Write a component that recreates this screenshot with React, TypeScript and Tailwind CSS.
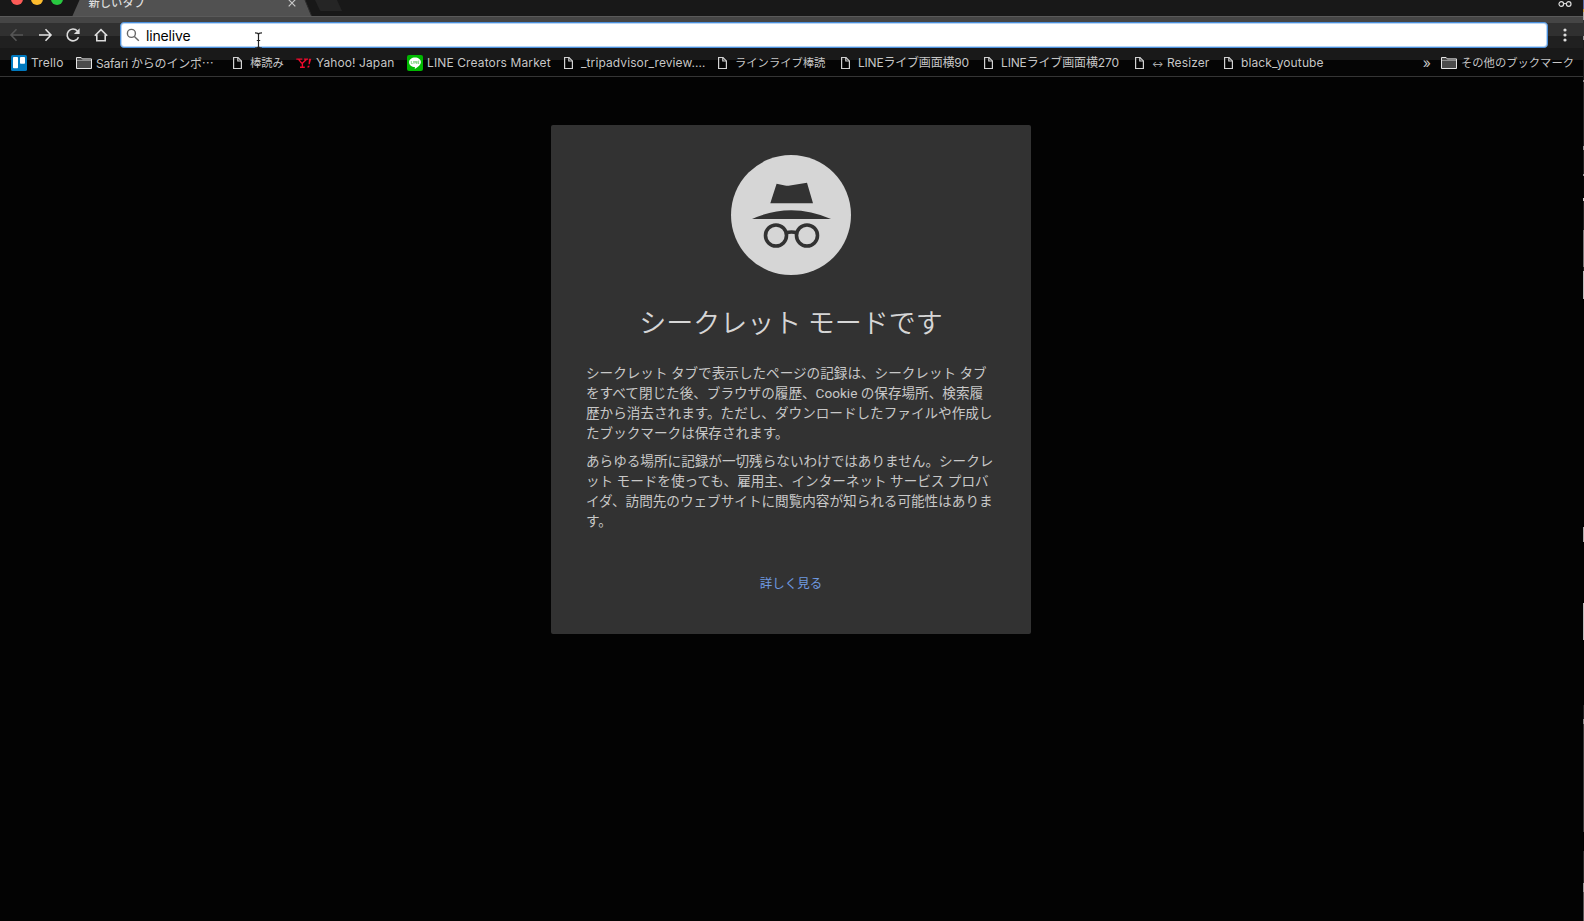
import type { ReactNode } from "react";

type IconKind = "trello" | "folder" | "page" | "yahoo" | "line";

interface Bookmark {
  label: ReactNode;
  icon: IconKind;
  slot: string;
  text: string;
}

const BOOKMARKS: Bookmark[] = [
  { label: "Trello", icon: "trello", slot: "w-[65px]", text: "tracking-[0.2px]" },
  {
    label: <>Safari からのインポ<span className="font-['Noto_Sans_CJK_JP',sans-serif]">…</span></>,
    icon: "folder",
    slot: "w-[154px]",
    text: "tracking-[-0.2px]",
  },
  { label: "棒読み", icon: "page", slot: "w-[66px]", text: "text-[11.3px]" },
  { label: "Yahoo! Japan", icon: "yahoo", slot: "w-[111px]", text: "tracking-[0.1px]" },
  { label: "LINE Creators Market", icon: "line", slot: "w-[154px]", text: "tracking-[0.12px]" },
  { label: "_tripadvisor_review.…", icon: "page", slot: "w-[154px]", text: "tracking-[0.1px]" },
  { label: "ラインライブ棒読", icon: "page", slot: "w-[123px]", text: "text-[11.3px]" },
  { label: "LINEライブ画面横90", icon: "page", slot: "w-[143px]", text: "tracking-[-0.2px]" },
  { label: "LINEライブ画面横270", icon: "page", slot: "w-[151px]", text: "tracking-[-0.15px]" },
  {
    label: <><span className="text-[8.5px]">↔</span> Resizer</>,
    icon: "page",
    slot: "w-[89px]",
    text: "tracking-[0.1px]",
  },
  { label: "black_youtube", icon: "page", slot: "w-[110px]", text: "tracking-[0.12px]" },
];

const FIRST_PARAGRAPH = [
  "シークレット タブで表示したページの記録は、シークレット タブ",
  "をすべて閉じた後、ブラウザの履歴、Cookie の保存場所、検索履",
  "歴から消去されます。ただし、ダウンロードしたファイルや作成し",
  "たブックマークは保存されます。",
];

const SECOND_PARAGRAPH = [
  "あらゆる場所に記録が一切残らないわけではありません。シークレ",
  "ット モードを使っても、雇用主、インターネット サービス プロバ",
  "イダ、訪問先のウェブサイトに閲覧内容が知られる可能性はありま",
  "す。",
];

function FolderIcon() {
  return (
    <svg width="16" height="16" viewBox="0 0 16 16" className="shrink-0">
      <path d="M.5 2.5h4.6l1.2 1.4h9.2v9.6H.5z" fill="#4b4b4b" stroke="#e4e4e4" />
      <path d="M1 5.5h14" stroke="#8d8d8d" />
    </svg>
  );
}

function BookmarkIcon({ kind }: { kind: IconKind }) {
  if (kind === "folder") return <FolderIcon />;
  if (kind === "trello") {
    return (
      <svg width="16" height="16" viewBox="0 0 16 16" className="shrink-0">
        <rect width="16" height="16" rx="1.6" fill="#0079bf" />
        <rect x="2" y="2" width="5" height="11.3" rx=".8" fill="#fff" />
        <rect x="9" y="2" width="5" height="6.8" rx=".8" fill="#fff" />
      </svg>
    );
  }
  if (kind === "yahoo") {
    return (
      <svg width="16" height="16" viewBox="0 0 16 16" className="shrink-0">
        <path d="M.3 4.1h6M8 4.1h4M2.6 4.4l3.2 4M10.3 4.4L6.4 8.3v3.8M4 12.2h4.8" fill="none" stroke="#f00a2d" strokeWidth="1.4" />
        <path d="M13 3.8h2.3l-1.6 5.4h-1.2zM11.8 10.8h1.8l-.5 1.7h-1.8z" fill="#f00a2d" />
      </svg>
    );
  }
  if (kind === "line") {
    return (
      <svg width="16" height="16" viewBox="0 0 16 16" className="shrink-0">
        <rect width="16" height="16" rx="2" fill="#00b900" />
        <path d="M8 2.6c3.3 0 5.9 2.1 5.9 4.7 0 2.3-2.7 4.6-5.7 6.5-.4.2-.5 0-.4-.4l.1-1.3C4.7 12 2.1 10 2.1 7.3 2.1 4.7 4.7 2.6 8 2.6z" fill="#fff" />
        <path d="M4.3 6v2.6h1.4M6.7 6v2.6M7.9 8.6V6l1.7 2.6V6M12.2 6.1h-1.3v2.4h1.3M11 7.3h1.1" fill="none" stroke="#5cc95c" strokeWidth=".7" />
      </svg>
    );
  }
  return (
    <svg width="16" height="16" viewBox="0 0 16 16" className="shrink-0">
      <path d="M3.600 2.500h4.400l3.400 3.400v7.600H3.600z" fill="none" stroke="#d2d2d2" strokeWidth="1.200" />
      <path d="M7.800 2.500v3.500h3.500" fill="none" stroke="#d2d2d2" strokeWidth="1.200" />
    </svg>
  );
}

function TabStrip() {
  return (
    <div className="relative h-[17px] overflow-hidden border-b border-[#5a5a5a] bg-[#181818]">
      {/* Window buttons, cut off by the top of the screen */}
      <svg width="70" height="16" className="absolute left-0 top-0">
        <circle cx="17" cy="-1" r="6" fill="#fc5b57" />
        <circle cx="37" cy="-1" r="6" fill="#fdbc2e" />
        <circle cx="57" cy="-1" r="6" fill="#28c840" />
      </svg>
      <svg width="280" height="17" className="absolute left-[70px] top-0">
        <path d="M2 17L9.500 0H235l7 17z" fill="#515151" />
        <path d="M235 0l7 17" stroke="#2c2c2c" fill="none" />
        <path d="M245 0h22l5 11h-20c-1.500 0-2-.5-2.500-1.500z" fill="#252525" />
      </svg>
      <span className="absolute left-[88.5px] top-[-5px] text-[11.3px] font-medium leading-[16px] text-[#dcdcdc]">新しいタブ</span>
      <svg width="8" height="8" viewBox="0 0 8 8" className="absolute left-[288px] top-[-1px]">
        <path d="M.7.7l6.6 6.6M7.3.7L.7 7.3" stroke="#c9c9c9" strokeWidth="1.2" />
      </svg>
      <svg width="16" height="8" viewBox="0 0 16 8" className="absolute right-[11px] top-0">
        <circle cx="4.3" cy="4" r="2.300" fill="none" stroke="#ddd" strokeWidth="1.2" />
        <circle cx="11.7" cy="4" r="2.300" fill="none" stroke="#ddd" strokeWidth="1.2" />
        <path d="M6.5 3.600h3" stroke="#ddd" />
      </svg>
    </div>
  );
}

function NavIcon({ color, children }: { color: string; children: ReactNode }) {
  return (
    <svg width="28" height="16" viewBox="0 0 28 16" fill="none" stroke={color} strokeWidth="1.6" className="shrink-0">
      {children}
    </svg>
  );
}

function Toolbar() {
  return (
    <div className="relative flex h-[31px] items-start bg-[linear-gradient(#454545_0_6px,#303030_6px_19px,#202020_19px)] pl-[3px] pt-[5px]">
      <div className="flex w-[117px] pt-[5px]">
        <NavIcon color="#555">
          <path d="M20 8H8M13.500 2.300L8 8l5.500 5.700" />
        </NavIcon>
        <NavIcon color="#e2e2e2">
          <path d="M8 8h12M14.500 2.300L20 8l-5.500 5.700" />
        </NavIcon>
        <NavIcon color="#dcdcdc">
          <path d="M19.500 10.200A5.900 5.900 0 1 1 18.400 4" />
          <path d="M20.600 1.300v5.700h-5.700z" fill="#dcdcdc" stroke="none" />
        </NavIcon>
        <NavIcon color="#dcdcdc">
          <path d="M7.800 8.800L14 2.600l6.200 6.200M9.800 7.500v6.300h8.400V7.500" />
        </NavIcon>
      </div>
      <div className="flex h-[26px] w-[1428px] items-center rounded-[4px] border border-[#4a8fdc] bg-white pl-[5px] shadow-[inset_0_0_0_1px_#b9d6f5]">
        <svg width="14" height="14" viewBox="0 0 14 14" fill="none" stroke="#666" strokeWidth="1.4">
          <circle cx="5.400" cy="5.400" r="4" />
          <path d="M8.400 8.400l4.400 4.400" />
        </svg>
        <span className="ml-[6px] pt-px text-[14px] leading-[20px] tracking-[-0.15px] text-black">linelive</span>
      </div>
      <svg width="4" height="16" viewBox="0 0 4 16" fill="#dcdcdc" className="ml-[15px] mt-[5px]">
        <circle cx="2" cy="3" r="1.6" />
        <circle cx="2" cy="8" r="1.6" />
        <circle cx="2" cy="13" r="1.6" />
      </svg>
      {/* Text cursor */}
      <svg width="9" height="17" viewBox="0 0 9 17" fill="none" stroke="#222" strokeWidth="1.2" className="absolute left-[254px] top-[15px]">
        <path d="M1 .8c2 0 3.500.4 3.500 1.700v12c0 1.300-1.500 1.700-3.500 1.700M8 .8c-2 0-3.500.4-3.500 1.700M4.500 14.500c0 1.300 1.500 1.700 3.500 1.700M2.800 8.500h3.400" />
      </svg>
    </div>
  );
}

function BookmarksBar() {
  return (
    <div className="flex h-[29px] items-start border-b border-[#353535] bg-[linear-gradient(#191919_0_12px,#050505_12px)] pl-[11px] pt-[7px] text-[12px] leading-[16px] text-[#c6c6c6]">
      {BOOKMARKS.map((b, i) => (
        <div key={i} className={`flex h-[16px] shrink-0 items-center gap-[4px] whitespace-nowrap ${b.slot} ${b.text}`}>
          <BookmarkIcon kind={b.icon} />
          <span>{b.label}</span>
        </div>
      ))}
      <div className="ml-auto flex h-[16px] items-center whitespace-nowrap pr-[10px]">
        <span className="mr-[10px] text-[14px] leading-[16px]">»</span>
        <FolderIcon />
        <span className="ml-[4px] text-[11.3px]">その他のブックマーク</span>
      </div>
    </div>
  );
}

function IncognitoLogo() {
  return (
    <svg width="120" height="120" viewBox="0 0 120 120">
      <circle cx="60" cy="60" r="60" fill="#d6d6d6" />
      <path d="M45.600 28.700L54 30.500q2.500.4 5 0L76 27.800 82 48.300H39.300z" fill="#323232" />
      <path d="M21 64q39-17.500 79 0z" fill="#323232" />
      <g fill="none" stroke="#323232" strokeWidth="3.600">
        <circle cx="45" cy="80.500" r="10.500" />
        <circle cx="76" cy="80.500" r="10.500" />
        <path d="M55 78q5.500-2 11 0" />
      </g>
    </svg>
  );
}

function Paragraph({ lines }: { lines: string[] }) {
  return (
    <p className="mb-[8px] whitespace-nowrap">
      {lines.map((line) => (
        <span key={line} className="block">{line}</span>
      ))}
    </p>
  );
}

export default function App() {
  return (
    <div className="relative flex h-[921px] w-[1584px] flex-col overflow-hidden bg-[#030303] font-[Inter,'Noto_Sans_CJK_JP',sans-serif]">
      <TabStrip />
      <Toolbar />
      <BookmarksBar />
      <main className="flex flex-1 justify-center pr-[2px] pt-[48px]">
        <section className="flex h-[509px] w-[480px] flex-col items-center rounded-[2px] bg-[#323232] pt-[30px] font-[Roboto,'Noto_Sans_CJK_JP',sans-serif] text-[#c8c8c8]">
          <IncognitoLogo />
          <h1 className="mt-[29px] whitespace-nowrap text-[27px] font-[350] leading-[40px] text-[#d6d6d6]">シークレット モードです</h1>
          <div className="mt-[19px] w-[410px] text-[13.6px] font-normal leading-[20px]">
            <Paragraph lines={FIRST_PARAGRAPH} />
            <Paragraph lines={SECOND_PARAGRAPH} />
          </div>
          <a href="#" className="mt-[35px] text-[12.5px] leading-[20px] text-[#6f9ae0]">詳しく見る</a>
        </section>
      </main>
      {/* Sliver of the desktop behind the window */}
      <div className="absolute right-0 top-0 h-full w-px bg-[linear-gradient(#5568a0_0_9px,#c79a3a_9px_12px,#aaa_12px_20px,#333_20px_36px,#999_36px_40px,#1c1c1c_40px_80px,#888_80px_82px,#222_82px_146px,#999_146px_150px,#222_150px_174px,#999_174px_176px,#080808_176px_198px,#ccc_198px_201px,#222_201px_230px,#777_230px_267px,#222_267px_271px,#bbb_271px_299px,#030303_299px_527px,#aaa_527px_542px,#030303_542px_603px,#bbb_603px_640px,#030303_640px_705px,#222_705px_719px,#888_719px_724px,#383838_724px_832px,#030303_832px_851px,#2a2a2a_851px_883px,#999_883px_892px,#555_892px)]" />
    </div>
  );
}
